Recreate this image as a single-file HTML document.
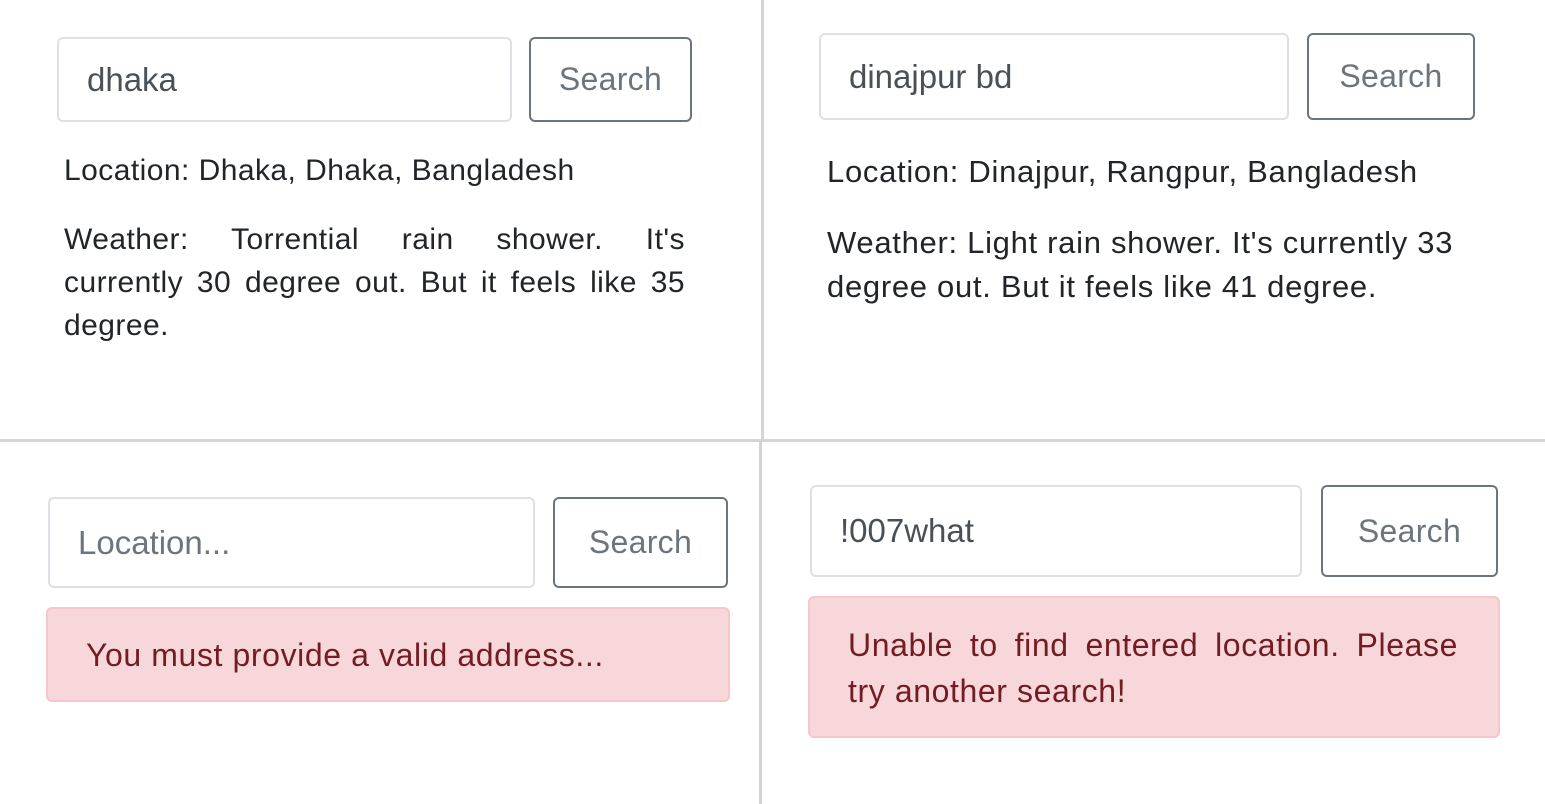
<!DOCTYPE html>
<html><head><style>
body{margin:0;width:1545px;height:804px;background:#fff;position:relative;overflow:hidden;font-family:"Liberation Sans",sans-serif;color:#212529}
.a{position:absolute;box-sizing:border-box}
.in{border:2px solid #dde1e5;border-radius:6px;color:#495057;font-size:33px;padding-left:28px;display:flex;align-items:center}
.btn{border:2px solid #6c757d;border-radius:6px;color:#6c757d;font-size:32px;display:flex;align-items:center;justify-content:center;letter-spacing:0.3px}
.t{font-size:30px;line-height:43px;letter-spacing:0.45px;white-space:nowrap}
.j{text-align:justify;text-align-last:justify;white-space:normal}
.al{background:#f8d7da;border:2px solid #f5c6cb;border-radius:6px;color:#721c24;font-size:32px;line-height:46px;padding-left:38px;letter-spacing:0.6px}
</style></head><body>
<div class="a" style="left:761px;top:0;width:3px;height:440px;background:#d4d4d4"></div>
<div class="a" style="left:759px;top:442px;width:3px;height:362px;background:#d4d4d4"></div>
<div class="a" style="left:0;top:439px;width:1545px;height:3px;background:#d4d4d4"></div>

<div class="a in" style="left:57px;top:37px;width:455px;height:85px">dhaka</div>
<div class="a btn" style="left:529px;top:37px;width:163px;height:85px">Search</div>
<div class="a t" style="left:64px;top:149px">Location: Dhaka, Dhaka, Bangladesh</div>
<div class="a t" style="left:64px;top:218px;width:621px">
<div class="j">Weather: Torrential rain shower. It's</div>
<div class="j">currently 30 degree out. But it feels like 35</div>
<div>degree.</div>
</div>

<div class="a in" style="left:819px;top:33px;width:470px;height:87px">dinajpur bd</div>
<div class="a btn" style="left:1307px;top:33px;width:168px;height:87px">Search</div>
<div class="a t" style="left:827px;top:150px;font-size:31px;letter-spacing:0.7px">Location: Dinajpur, Rangpur, Bangladesh</div>
<div class="a t" style="left:827px;top:221px;line-height:44px;font-size:31px;letter-spacing:0.7px">Weather: Light rain shower. It's currently 33<br>degree out. But it feels like 41 degree.</div>

<div class="a in" style="left:48px;top:497px;width:487px;height:91px;color:#6c757d">Location...</div>
<div class="a btn" style="left:553px;top:497px;width:175px;height:91px">Search</div>
<div class="a al" style="left:46px;top:607px;width:684px;height:95px;padding-top:23px">You must provide a valid address...</div>

<div class="a in" style="left:810px;top:485px;width:492px;height:92px">!007what</div>
<div class="a btn" style="left:1321px;top:485px;width:177px;height:92px">Search</div>
<div class="a al" style="left:808px;top:596px;width:692px;height:142px;padding-top:24px;padding-right:40px;text-align:justify">Unable to find entered location. Please try another search!</div>
</body></html>
